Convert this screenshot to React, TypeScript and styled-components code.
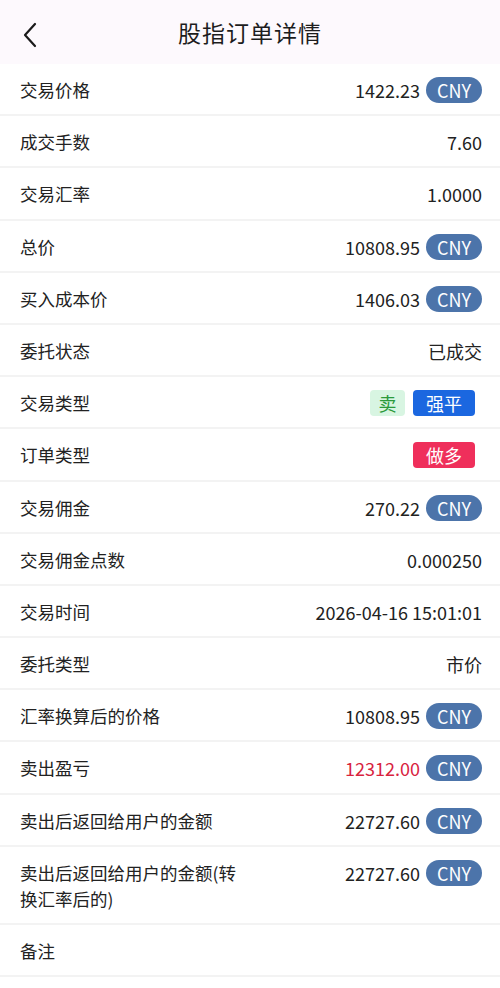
import React from "react";
import styled, { createGlobalStyle } from "styled-components";

const GlobalStyle = createGlobalStyle`
  html, body {
    margin: 0;
    padding: 0;
    background: #ffffff;
  }
  body {
    font-family: "Noto Sans CJK SC", "Noto Sans", sans-serif;
    color: #222222;
  }
`;

const Page = styled.div`
  width: 500px;
  min-height: 988px;
  background: #ffffff;
`;

const Header = styled.header`
  height: 64px;
  display: flex;
  align-items: center;
  justify-content: center;
  position: relative;
  background: #fdf9fd;
`;

const BackButton = styled.button`
  position: absolute;
  left: 16px;
  top: 18px;
  width: 28px;
  height: 34px;
  border: 0;
  padding: 0;
  background: transparent;
  display: flex;
  align-items: center;
  justify-content: center;
`;

const Title = styled.h1`
  margin: 0;
  font-size: 23px;
  font-weight: 400;
  color: #1d1d1d;
  letter-spacing: 1px;
`;

const List = styled.div`
  display: flex;
  flex-direction: column;
`;

const Row = styled.div`
  display: flex;
  align-items: flex-start;
  justify-content: space-between;
  padding: 13px 18px 11.2px 20px;
  border-bottom: 2px solid #f3f3f3;
`;

const Label = styled.div`
  max-width: 232px;
  min-height: 26px;
  font-size: 17.5px;
  line-height: 26px;
  color: #222222;
`;

const Value = styled.div`
  display: flex;
  align-items: center;
  gap: 6px;
  height: 26px;
  font-size: 18px;
`;

const Amount = styled.span<{ $red?: boolean }>`
  color: ${({ $red }) => ($red ? "#d8233f" : "#222222")};
`;

const Currency = styled.span`
  display: inline-flex;
  align-items: center;
  justify-content: center;
  width: 56px;
  height: 26px;
  border-radius: 13px;
  background: #4c74aa;
  color: #ffffff;
  font-size: 18px;
`;

const Tags = styled.div`
  display: flex;
  align-items: center;
  gap: 8px;
  margin-right: 7px;
`;

const Tag = styled.span<{ $bg: string; $fg: string; $w: number }>`
  display: inline-flex;
  align-items: center;
  justify-content: center;
  width: ${({ $w }) => $w}px;
  height: 26px;
  border-radius: 4px;
  background: ${({ $bg }) => $bg};
  color: ${({ $fg }) => $fg};
  font-size: 18px;
`;

type Item = {
  label: string;
  value?: string;
  cny?: boolean;
  red?: boolean;
  tags?: { text: string; bg: string; fg: string; w: number }[];
};

const items: Item[] = [
  { label: "交易价格", value: "1422.23", cny: true },
  { label: "成交手数", value: "7.60" },
  { label: "交易汇率", value: "1.0000" },
  { label: "总价", value: "10808.95", cny: true },
  { label: "买入成本价", value: "1406.03", cny: true },
  { label: "委托状态", value: "已成交" },
  {
    label: "交易类型",
    tags: [
      { text: "卖", bg: "#d8f5e2", fg: "#2b9a3b", w: 35 },
      { text: "强平", bg: "#1b67e0", fg: "#ffffff", w: 62 },
    ],
  },
  {
    label: "订单类型",
    tags: [{ text: "做多", bg: "#ef2f5b", fg: "#ffffff", w: 62 }],
  },
  { label: "交易佣金", value: "270.22", cny: true },
  { label: "交易佣金点数", value: "0.000250" },
  { label: "交易时间", value: "2026-04-16 15:01:01" },
  { label: "委托类型", value: "市价" },
  { label: "汇率换算后的价格", value: "10808.95", cny: true },
  { label: "卖出盈亏", value: "12312.00", cny: true, red: true },
  { label: "卖出后返回给用户的金额", value: "22727.60", cny: true },
  { label: "卖出后返回给用户的金额(转换汇率后的)", value: "22727.60", cny: true },
  { label: "备注" },
];

const BackIcon = () => (
  <svg width="16" height="26" viewBox="0 0 16 26" fill="none">
    <path d="M13 2 L3 13 L13 24" stroke="#1a1a1a" strokeWidth="2.2" strokeLinecap="round" strokeLinejoin="round" />
  </svg>
);

const App = () => {
  return (
    <Page>
      <GlobalStyle />
      <Header>
        <BackButton aria-label="返回">
          <BackIcon />
        </BackButton>
        <Title>股指订单详情</Title>
      </Header>
      <List>
        {items.map((item) => (
          <Row key={item.label}>
            <Label>{item.label}</Label>
            {item.tags ? (
              <Tags>
                {item.tags.map((t) => (
                  <Tag key={t.text} $bg={t.bg} $fg={t.fg} $w={t.w}>
                    {t.text}
                  </Tag>
                ))}
              </Tags>
            ) : item.value ? (
              <Value>
                <Amount $red={item.red}>{item.value}</Amount>
                {item.cny && <Currency>CNY</Currency>}
              </Value>
            ) : null}
          </Row>
        ))}
      </List>
    </Page>
  );
};

export default App;
